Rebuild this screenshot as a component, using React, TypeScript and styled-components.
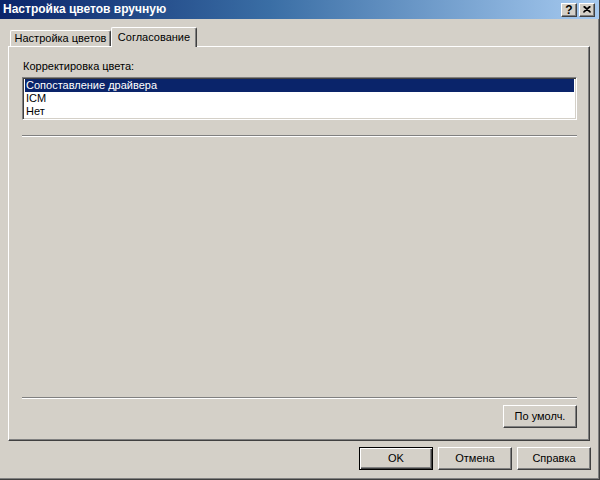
import React from "react";
import styled, { createGlobalStyle } from "styled-components";

const Global = createGlobalStyle`
  html, body { margin: 0; padding: 0; background: #d4d0c8; }
  body { font-family: "Liberation Sans", Arial, sans-serif; font-size: 11px; }
  * { box-sizing: border-box; }
`;

const Win = styled.div`
  width: 600px;
  height: 480px;
  background: #d4d0c8;
  display: flex;
  flex-direction: column;
  border-right: 1px solid #404040;
  border-bottom: 1px solid #404040;
  box-shadow: inset -1px -1px #808080;
  color: #000;
  font-family: "Liberation Sans", Arial, sans-serif;
  font-size: 11px;
`;

const TitleBar = styled.div`
  height: 19px;
  flex: none;
  display: flex;
  align-items: center;
  padding: 0 4px 0 3px;
  background: linear-gradient(to right, #0a246a 0%, #3a6ea5 45%, #a6caf0 100%);
`;

const Title = styled.div`
  flex: 1;
  color: #fff;
  font-weight: bold;
  font-size: 12px;
  line-height: 13px;
  white-space: nowrap;
`;

const Caps = styled.div`
  display: flex;
  gap: 2px;
  align-items: center;
`;

const CapBtn = styled.div`
  width: 16px;
  height: 14px;
  background: #d4d0c8;
  border-top: 1px solid #fff;
  border-left: 1px solid #fff;
  border-right: 1px solid #404040;
  border-bottom: 1px solid #404040;
  box-shadow: inset -1px -1px #808080;
  display: flex;
  align-items: center;
  justify-content: center;
  font-weight: bold;
  font-size: 12px;
  line-height: 12px;
  color: #000;
`;

const Content = styled.div`
  flex: 1;
  display: flex;
  flex-direction: column;
  padding: 8px 9px 0 8px;
  min-height: 0;
`;

const TabStrip = styled.div`
  height: 19px;
  flex: none;
  display: flex;
  align-items: flex-end;
  padding-left: 2px;
  position: relative;
  z-index: 2;
`;

const Tab = styled.div<{ $active?: boolean }>`
  height: ${(p) => (p.$active ? 20 : 16)}px;
  margin-bottom: ${(p) => (p.$active ? -1 : 0)}px;
  width: ${(p) => (p.$active ? 86 : 101)}px;
  background: #d4d0c8;
  border-top: 1px solid #fff;
  border-left: 1px solid #fff;
  border-right: 1px solid #404040;
  box-shadow: inset -1px 0 #808080;
  border-top-left-radius: 2px;
  border-top-right-radius: 2px;
  display: flex;
  justify-content: center;
  padding-top: ${(p) => (p.$active ? 3 : 1)}px;
  line-height: 13px;
  white-space: nowrap;
`;

const Panel = styled.div`
  flex: 1;
  display: flex;
  flex-direction: column;
  border-top: 1px solid #fff;
  border-left: 1px solid #fff;
  border-right: 1px solid #404040;
  border-bottom: 1px solid #404040;
  box-shadow: inset -1px -1px #808080;
  padding: 13px 12px 12px 13px;
  position: relative;
  z-index: 1;
`;

const Label = styled.div`
  line-height: 13px;
  height: 13px;
  padding-left: 1px;
`;

const ListBox = styled.div`
  margin-top: 4px;
  height: 43px;
  background: #fff;
  border-top: 1px solid #808080;
  border-left: 1px solid #808080;
  border-right: 1px solid #fff;
  border-bottom: 1px solid #fff;
  box-shadow: inset 1px 1px #404040, inset -1px -1px #d4d0c8;
  padding: 1px 2px 2px 2px;
  display: flex;
  flex-direction: column;
`;

const Row = styled.div<{ $sel?: boolean }>`
  height: 13px;
  line-height: 13px;
  padding-left: 1px;
  background: ${(p) => (p.$sel ? "#0a246a" : "transparent")};
  color: ${(p) => (p.$sel ? "#fff" : "#000")};
  white-space: nowrap;
`;

const Sep = styled.div<{ $top: number }>`
  margin-top: ${(p) => p.$top}px;
  height: 2px;
  border-top: 1px solid #808080;
  border-bottom: 1px solid #fff;
  flex: none;
`;

const Spacer = styled.div`
  flex: 1;
`;

const RightRow = styled.div`
  display: flex;
  justify-content: flex-end;
  margin-top: 6px;
`;

const Btn = styled.div<{ $default?: boolean }>`
  width: 74px;
  height: 23px;
  background: #d4d0c8;
  display: flex;
  align-items: center;
  justify-content: center;
  line-height: 13px;
  white-space: nowrap;
  border-top: 1px solid ${(p) => (p.$default ? "#000" : "#fff")};
  border-left: 1px solid ${(p) => (p.$default ? "#000" : "#fff")};
  border-right: 1px solid ${(p) => (p.$default ? "#000" : "#404040")};
  border-bottom: 1px solid ${(p) => (p.$default ? "#000" : "#404040")};
  box-shadow: ${(p) =>
    p.$default
      ? "inset 1px 1px #fff, inset -1px -1px #404040, inset -2px -2px #808080"
      : "inset -1px -1px #808080"};
`;

const Footer = styled.div`
  height: 38px;
  flex: none;
  display: flex;
  justify-content: flex-end;
  gap: 5px;
  padding: 6px 8px 0 0;
`;

export default function App() {
  return (
    <>
      <Global />
      <Win>
        <TitleBar>
          <Title>Настройка цветов вручную</Title>
          <Caps>
            <CapBtn>?</CapBtn>
            <CapBtn>
              <svg width="8" height="7" viewBox="0 0 8 7">
                <path d="M0.5 0.5 L7.5 6.5 M1.5 0.5 L7.5 6 M7.5 0.5 L0.5 6.5 M6.5 0.5 L0.5 6" stroke="#000" strokeWidth="1.2" fill="none" />
              </svg>
            </CapBtn>
          </Caps>
        </TitleBar>
        <Content>
          <TabStrip>
            <Tab>Настройка цветов</Tab>
            <Tab $active>Согласование</Tab>
          </TabStrip>
          <Panel>
            <Label>Корректировка цвета:</Label>
            <ListBox>
              <Row $sel>Сопоставление драйвера</Row>
              <Row>ICM</Row>
              <Row>Нет</Row>
            </ListBox>
            <Sep $top={15} />
            <Spacer />
            <Sep $top={0} />
            <RightRow>
              <Btn>По умолч.</Btn>
            </RightRow>
          </Panel>
        </Content>
        <Footer>
          <Btn $default>OK</Btn>
          <Btn>Отмена</Btn>
          <Btn>Справка</Btn>
        </Footer>
      </Win>
    </>
  );
}
